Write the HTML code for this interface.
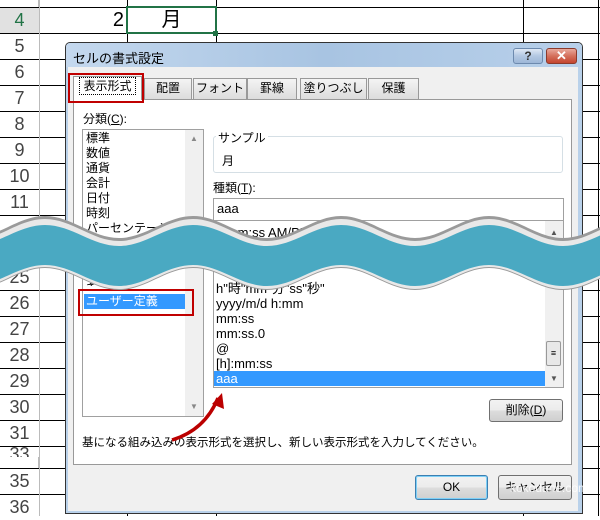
<!DOCTYPE html>
<html><head><meta charset="utf-8"><style>
*{margin:0;padding:0;box-sizing:border-box}
body{width:600px;height:516px;overflow:hidden;background:#fff;position:relative;font-family:"Liberation Sans","Noto Sans CJK JP",sans-serif;font-size:12px;color:#000}
.a{position:absolute}
.rh{position:absolute;left:0;width:39px;text-align:center;font-size:18px;color:#444;background:#fff}
.hl{position:absolute;left:0;width:600px;height:1px;background:#000}
.vl{position:absolute;top:0;width:1px;height:516px;background:#000}
.tab{position:absolute;top:78px;height:21px;border:1px solid #999;border-bottom:none;background:linear-gradient(#f4f4f4,#dcdcdc);text-align:center;line-height:19px;font-size:12px}
.it{position:absolute;left:216px;font-size:12px;line-height:15px}
.btn{position:absolute;border:1px solid #707070;border-radius:3px;background:linear-gradient(#f2f2f2,#ebebeb 50%,#dddddd 50%,#cfcfcf);text-align:center;font-size:12px}
</style></head><body>
<div class="a" style="left:0;top:0;width:39px;height:516px;background:#fff;border-right:1px solid #bbb"></div>
<div class="vl" style="left:127px"></div>
<div class="vl" style="left:216px"></div>
<div class="vl" style="left:523px"></div>
<div class="vl" style="left:598px"></div>
<div class="hl" style="top:7px"></div><div class="hl" style="top:33px"></div><div class="hl" style="top:59px"></div><div class="hl" style="top:85px"></div><div class="hl" style="top:111px"></div><div class="hl" style="top:137px"></div><div class="hl" style="top:163px"></div><div class="hl" style="top:189px"></div><div class="hl" style="top:215px"></div>
<div class="hl" style="top:290px"></div><div class="hl" style="top:316px"></div><div class="hl" style="top:342px"></div><div class="hl" style="top:368px"></div><div class="hl" style="top:394px"></div><div class="hl" style="top:420px"></div><div class="hl" style="top:446px"></div><div class="hl" style="top:468px"></div><div class="hl" style="top:494px"></div>
<div class="a" style="left:0;top:0;width:39px;height:516px">
<div class="rh" style="top:8px;height:25px;background:#e1e1e1;color:#217346;line-height:25px">4</div>
<div class="rh" style="top:34px;line-height:25px">5</div>
<div class="rh" style="top:60px;line-height:25px">6</div>
<div class="rh" style="top:86px;line-height:25px">7</div>
<div class="rh" style="top:112px;line-height:25px">8</div>
<div class="rh" style="top:138px;line-height:25px">9</div>
<div class="rh" style="top:164px;line-height:25px">10</div>
<div class="rh" style="top:190px;line-height:25px">11</div>
<div class="rh" style="top:265px;line-height:25px">25</div>
<div class="rh" style="top:291px;line-height:25px">26</div>
<div class="rh" style="top:317px;line-height:25px">27</div>
<div class="rh" style="top:343px;line-height:25px">28</div>
<div class="rh" style="top:369px;line-height:25px">29</div>
<div class="rh" style="top:395px;line-height:25px">30</div>
<div class="rh" style="top:421px;line-height:25px">31</div>
<div class="rh" style="top:447px;line-height:14px;height:10px;overflow:hidden">33</div>
<div class="rh" style="top:469px;line-height:25px">35</div>
<div class="rh" style="top:495px;line-height:25px">36</div>
</div>
<div class="a" style="left:39px;top:0;width:1px;height:516px;background:#bbb"></div>
<div class="a" style="left:40px;top:8px;width:84px;font-size:20px;text-align:right;line-height:25px">2</div>
<div class="a" style="left:126px;top:6px;width:91px;height:28px;border:2px solid #217346"></div>
<div class="a" style="left:126px;top:8px;width:91px;font-size:20px;text-align:center;line-height:25px">月</div>
<div class="a" style="left:213px;top:31px;width:5px;height:5px;background:#217346"></div>
<div class="a" style="left:65px;top:42px;width:518px;height:472px;border:1px solid #333;border-radius:5px 5px 0 0;background:#b9d1ea"></div>
<div class="a" style="left:66px;top:43px;width:516px;height:24px;border-radius:4px 4px 0 0;background:linear-gradient(90deg,#c4d8ee,#a8c4e2 50%,#b8d0ea)"></div>
<div class="a" style="left:73px;top:48px;font-size:13px;color:#000">セルの書式設定</div>
<div class="btn" style="left:513px;top:48px;width:30px;height:16px;border-color:#6d8aae;background:linear-gradient(#dfe9f5,#b3c8e2 50%,#9db7d8);font-weight:bold;line-height:14px;color:#333">?</div>
<div class="btn" style="left:546px;top:48px;width:31px;height:16px;border-color:#8b3a2c;background:linear-gradient(#e9a99c,#d4705c 50%,#c4452f);color:#fff;font-weight:bold;line-height:14px;font-size:13px">✕</div>
<div class="a" style="left:68px;top:67px;width:510px;height:444px;background:#f0f0f0"></div>
<div class="a" style="left:73px;top:99px;width:499px;height:366px;background:#fff;border:1px solid #999"></div>
<div class="tab" style="left:144px;width:48px">配置</div>
<div class="tab" style="left:193px;width:54px">フォント</div>
<div class="tab" style="left:247px;width:50px">罫線</div>
<div class="tab" style="left:300px;width:67px">塗りつぶし</div>
<div class="tab" style="left:368px;width:51px">保護</div>
<div class="tab" style="left:73px;top:76px;width:69px;height:24px;background:#fff;border-color:#999"><span style="border:1px dotted #000;padding:1px 3px;font-size:12px">表示形式</span></div>
<div class="a" style="left:68px;top:73px;width:76px;height:30px;border:2px solid #c00000"></div>
<div class="a" style="left:83px;top:110px">分類(<u>C</u>):</div>
<div class="a" style="left:82px;top:129px;width:122px;height:288px;border:1px solid #a0a0a0;background:#fff"></div>
<div class="a" style="left:185px;top:130px;width:18px;height:286px;background:#f0f0f0"></div>
<div class="a" style="left:190px;top:134px;font-size:8px;color:#888">▲</div>
<div class="a" style="left:190px;top:402px;font-size:8px;color:#888">▼</div>
<div class="a" style="left:86px;top:131px;line-height:15px">標準<br>数値<br>通貨<br>会計<br>日付<br>時刻<br>パーセンテージ</div>
<div class="a" style="left:84px;top:294px;width:101px;height:15px;background:#3399ff;color:#fff;line-height:15px;padding-left:2px">ユーザー定義</div>
<div class="a" style="left:86px;top:278px;line-height:15px;height:8px;overflow:hidden">その他</div>
<div class="a" style="left:78px;top:289px;width:116px;height:27px;border:2px solid #c00000"></div>
<div class="a" style="left:213px;top:136px;width:350px;height:37px;border:1px solid #d5dfe5;border-radius:3px"></div>
<div class="a" style="left:216px;top:129px;background:#fff;padding:0 2px">サンプル</div>
<div class="a" style="left:222px;top:152px">月</div>
<div class="a" style="left:213px;top:179px">種類(<u>T</u>):</div>
<div class="a" style="left:213px;top:198px;width:351px;height:23px;border:1px solid #a0a0a0;line-height:20px;padding-left:3px;font-size:13px">aaa</div>
<div class="a" style="left:213px;top:220px;width:351px;height:168px;border:1px solid #a0a0a0;background:#fff"></div>
<div class="a" style="left:545px;top:221px;width:18px;height:166px;background:#f0f0f0"></div>
<div class="a" style="left:546px;top:341px;width:15px;height:25px;border:1px solid #999;border-radius:2px;background:#e8e8e8;text-align:center;font-size:9px;line-height:22px">≡</div>
<div class="a" style="left:550px;top:228px;font-size:8px;color:#555">▲</div>
<div class="a" style="left:550px;top:374px;font-size:8px;color:#555">▼</div>
<div class="it" style="top:225px;font-size:13px">h:mm:ss AM/PM</div>
<div class="it" style="top:265px;height:6px;overflow:hidden;font-size:13px">h:mm</div>
<div class="it" style="top:281px;font-size:13px">h"時"mm"分"ss"秒"</div>
<div class="it" style="top:296px;font-size:13px">yyyy/m/d h:mm</div>
<div class="it" style="top:311px;font-size:13px">mm:ss</div>
<div class="it" style="top:326px;font-size:13px">mm:ss.0</div>
<div class="it" style="top:341px;font-size:13px">@</div>
<div class="it" style="top:356px;font-size:13px">[h]:mm:ss</div>
<div class="a" style="left:214px;top:371px;width:331px;height:15px;background:#3399ff;color:#fff;font-size:13px;line-height:15px;padding-left:2px">aaa</div>
<div class="btn" style="left:489px;top:399px;width:74px;height:23px;line-height:21px">削除(<u>D</u>)</div>
<div class="a" style="left:82px;top:434px;font-size:11.5px">基になる組み込みの表示形式を選択し、新しい表示形式を入力してください。</div>
<div class="btn" style="left:415px;top:475px;width:73px;height:25px;line-height:23px;border-color:#3c7fb1;box-shadow:inset 0 0 0 1px #7ed0f7">OK</div>
<div class="btn" style="left:498px;top:475px;width:74px;height:25px;line-height:23px">キャンセル</div>
<div class="a" style="left:510px;top:481px;color:#fff;font-size:12px;opacity:.85">kokodane.com</div>
<svg class="a" style="left:0;top:0" width="600" height="516">
<path d="M172 440 Q205 430 218 398" stroke="#b00" stroke-width="3.5" fill="none"/>
<path d="M212 404 L222 393 L224 409 Z" fill="#b00"/>
<path d="M-103 216 C-76 216 -56 238 -29 238 C-2 238 18 216 45 216 C72 216 92 238 119 238 C146 238 166 216 193 216 C220 216 240 238 267 238 C294 238 314 216 341 216 C368 216 388 238 415 238 C442 238 462 216 489 216 C516 216 536 238 563 238 C590 238 610 216 637 216 L637 268 C610 268 590 290 563 290 C536 290 516 268 489 268 C462 268 442 290 415 290 C388 290 368 268 341 268 C314 268 294 290 267 290 C240 290 220 268 193 268 C166 268 146 290 119 290 C92 290 72 268 45 268 C18 268 -2 290 -29 290 C-56 290 -76 268 -103 268 Z" fill="#9a9a9a"/>
<path d="M-103 219 C-76 219 -56 241 -29 241 C-2 241 18 219 45 219 C72 219 92 241 119 241 C146 241 166 219 193 219 C220 219 240 241 267 241 C294 241 314 219 341 219 C368 219 388 241 415 241 C442 241 462 219 489 219 C516 219 536 241 563 241 C590 241 610 219 637 219 L637 267 C610 267 590 289 563 289 C536 289 516 267 489 267 C462 267 442 289 415 289 C388 289 368 267 341 267 C314 267 294 289 267 289 C240 289 220 267 193 267 C166 267 146 289 119 289 C92 289 72 267 45 267 C18 267 -2 289 -29 289 C-56 289 -76 267 -103 267 Z" fill="#e8e8e8"/>
<path d="M-103 225 C-76 225 -56 246 -29 246 C-2 246 18 225 45 225 C72 225 92 246 119 246 C146 246 166 225 193 225 C220 225 240 246 267 246 C294 246 314 225 341 225 C368 225 388 246 415 246 C442 246 462 225 489 225 C516 225 536 246 563 246 C590 246 610 225 637 225 L637 265 C610 265 590 286 563 286 C536 286 516 265 489 265 C462 265 442 286 415 286 C388 286 368 265 341 265 C314 265 294 286 267 286 C240 286 220 265 193 265 C166 265 146 286 119 286 C92 286 72 265 45 265 C18 265 -2 286 -29 286 C-56 286 -76 265 -103 265 Z" fill="#4aa9c2"/>
</svg>
</body></html>
